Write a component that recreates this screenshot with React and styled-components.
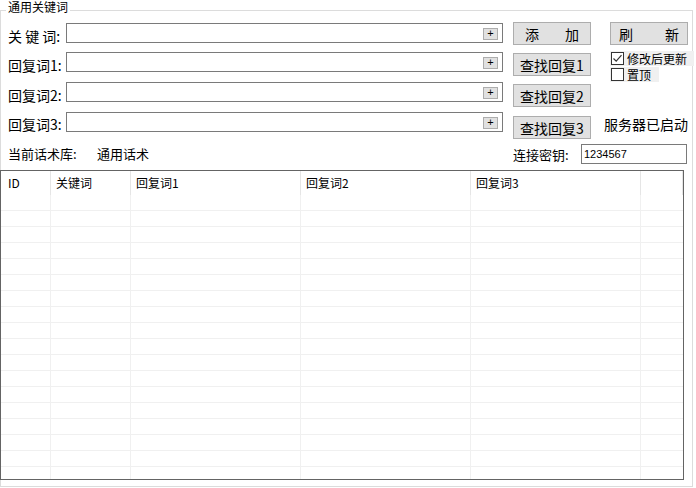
import React from "react";
import styled, { createGlobalStyle } from "styled-components";

const Global = createGlobalStyle`
  html, body {
    margin: 0;
    padding: 0;
    background: #ffffff;
  }
  body {
    font-family: "Noto Sans CJK SC", "Liberation Sans", sans-serif;
    color: #000000;
  }
`;

const Page = styled.div`
  width: 696px;
  height: 488px;
  overflow: hidden;
  background: #ffffff;
`;

const GroupBox = styled.div`
  position: relative;
  box-sizing: border-box;
  margin-top: 10px;
  width: 693px;
  height: 477px;
  border: 1px solid #dcdcdc;
  padding: 11px 0 0 7px;
`;

const Legend = styled.span`
  position: absolute;
  top: -10px;
  left: 5px;
  padding: 0 2px;
  background: #ffffff;
  font-size: 12px;
  line-height: 12px;
`;

const Upper = styled.div`
  display: flex;
  height: 117px;
`;

const LeftCol = styled.div`
  display: flex;
  flex-direction: column;
  width: 495px;
`;

const FieldRow = styled.div`
  display: flex;
  height: 31px;
  &:last-child > div {
    margin-top: 2px;
  }
`;

const Label = styled.label`
  width: 58px;
  padding-top: 5px;
  font-size: 14px;
  line-height: 18px;
  white-space: nowrap;
`;

const InputBox = styled.div`
  position: relative;
  box-sizing: border-box;
  margin-top: 1px;
  width: 437px;
  height: 20px;
  border: 1px solid #7a7a7a;
  background: #ffffff;
`;

const PlusButton = styled.span`
  position: absolute;
  right: 4px;
  top: 4px;
  box-sizing: border-box;
  width: 15px;
  height: 12px;
  border: 1px solid #adadad;
  background: #e1e1e1;
  font-family: "Liberation Sans", sans-serif;
  font-size: 11px;
  line-height: 9px;
  text-align: center;
`;

const MidCol = styled.div`
  display: flex;
  flex-direction: column;
  gap: 8px;
  margin-left: 10px;
  & > button:last-child {
    margin-top: 1px;
  }
`;

const Button = styled.button`
  box-sizing: border-box;
  display: flex;
  align-items: center;
  justify-content: ${(p) => (p.$spread ? "space-between" : "center")};
  width: 78px;
  height: 23px;
  padding: 0 ${(p) => p.$pad || 0}px;
  border: 1px solid #adadad;
  background: #e1e1e1;
  font-family: "Noto Sans CJK SC", sans-serif;
  font-size: 14px;
  line-height: 18px;
  color: #000000;
`;

const RightCol = styled.div`
  display: flex;
  flex-direction: column;
  align-items: flex-start;
  margin-left: 13px;
  width: 89px;
`;

const RightButton = styled(Button)`
  margin-left: 6px;
`;

const Check = styled.div`
  display: inline-flex;
  align-items: center;
  gap: 3px;
  margin-left: 6px;
  margin-top: ${(p) => p.$top}px;
  height: 15px;
  padding: 0 ${(p) => p.$right}px 0 1px;
  background: #f0f0f0;
  font-size: 12px;
  line-height: 15px;
  white-space: nowrap;
  flex-shrink: 0;
`;

const Box = styled.span`
  box-sizing: border-box;
  display: inline-flex;
  flex-shrink: 0;
  width: 13px;
  height: 13px;
  border: 1px solid #333333;
  background: #ffffff;
`;

const Status = styled.div`
  margin-top: 34px;
  font-size: 14px;
  line-height: 16px;
  white-space: nowrap;
`;

const Lower = styled.div`
  display: flex;
  align-items: flex-start;
  height: 20px;
  margin-top: 5px;
`;

const LibLabel = styled.span`
  width: 89px;
  padding-top: 1px;
  font-size: 13px;
  line-height: 18px;
`;

const LibName = styled.span`
  width: 416px;
  padding-top: 1px;
  font-size: 13px;
  line-height: 18px;
`;

const KeyLabel = styled.span`
  width: 68px;
  padding-top: 2px;
  font-size: 13px;
  line-height: 18px;
`;

const KeyInput = styled.div`
  box-sizing: border-box;
  width: 106px;
  height: 20px;
  padding-left: 2px;
  border: 1px solid #7a7a7a;
  font-family: "Liberation Sans", sans-serif;
  font-size: 11px;
  line-height: 18px;
`;

const Table = styled.div`
  box-sizing: border-box;
  margin: 6px 0 0 -8px;
  width: 684px;
  height: 310px;
  border: 1px solid #646464;
  overflow: hidden;
`;

const Grid = styled.div`
  display: grid;
  grid-template-columns: 50px 80px 170px 170px 170px 1fr;
`;

const Head = styled.div`
  box-sizing: border-box;
  height: 24px;
  padding-left: ${(p) => (p.$first ? 7 : 5)}px;
  border-right: 1px solid #e5e5e5;
  font-size: 12px;
  line-height: 23px;
  white-space: nowrap;
`;

const Cell = styled.div`
  box-sizing: border-box;
  height: 16px;
  border-right: 1px solid #f0f0f0;
  border-bottom: 1px solid #f0f0f0;
`;

const LastCell = styled(Cell)`
  border-right: none;
`;

const columns = ["ID", "关键词", "回复词1", "回复词2", "回复词3", ""];
const fields = ["关 键 词:", "回复词1:", "回复词2:", "回复词3:"];

export default function App() {
  const rows = Array.from({ length: 18 });
  return (
    <Page>
      <Global />
      <GroupBox>
        <Legend>通用关键词</Legend>
        <Upper>
          <LeftCol>
            {fields.map((f) => (
              <FieldRow key={f}>
                <Label>{f}</Label>
                <InputBox>
                  <PlusButton>+</PlusButton>
                </InputBox>
              </FieldRow>
            ))}
          </LeftCol>
          <MidCol>
            <Button $spread $pad={11}>
              <span>添</span>
              <span>加</span>
            </Button>
            <Button>查找回复1</Button>
            <Button>查找回复2</Button>
            <Button>查找回复3</Button>
          </MidCol>
          <RightCol>
            <RightButton $spread $pad={8}>
              <span>刷</span>
              <span>新</span>
            </RightButton>
            <Check $top={6} $right={7}>
              <Box>
                <svg width="11" height="11" viewBox="0 0 11 11">
                  <path d="M1.5 5.5 L4.2 8.2 L9.5 2.2" fill="none" stroke="#333" strokeWidth="1.2" />
                </svg>
              </Box>
              修改后更新
            </Check>
            <Check $top={1} $right={8}>
              <Box />
              置顶
            </Check>
            <Status>服务器已启动</Status>
          </RightCol>
        </Upper>
        <Lower>
          <LibLabel>当前话术库:</LibLabel>
          <LibName>通用话术</LibName>
          <KeyLabel>连接密钥:</KeyLabel>
          <KeyInput>1234567</KeyInput>
        </Lower>
        <Table>
          <Grid>
            {columns.map((c, i) => (
              <Head key={i} $first={i === 0}>
                {c}
              </Head>
            ))}
            {rows.map((_, r) =>
              columns.map((c, i) =>
                i === columns.length - 1 ? (
                  <LastCell key={`${r}-${i}`} />
                ) : (
                  <Cell key={`${r}-${i}`} />
                )
              )
            )}
          </Grid>
        </Table>
      </GroupBox>
    </Page>
  );
}
